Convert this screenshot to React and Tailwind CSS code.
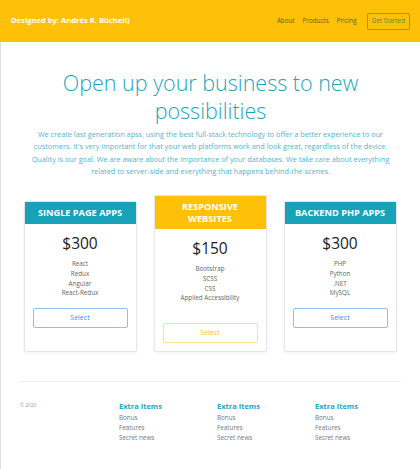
import React from "react";

const plans = [
  {
    title: ["SINGLE PAGE APPS"],
    price: "$300",
    items: ["React", "Redux", "Angular", "React-Redux"],
    head: "bg-[#17a2b8]",
    btn: "border-[#8fbdf5] text-[#3d8ef0]",
    wide: false,
  },
  {
    title: ["RESPONSIVE", "WEBSITES"],
    price: "$150",
    items: ["Bootstrap", "SCSS", "CSS", "Applied Accessibility"],
    head: "bg-[#ffc107]",
    btn: "border-[#ffe08a] text-[#f5c02a]",
    wide: true,
  },
  {
    title: ["BACKEND PHP APPS"],
    price: "$300",
    items: ["PHP", "Python", ".NET", "MySQL"],
    head: "bg-[#17a2b8]",
    btn: "border-[#8fbdf5] text-[#3d8ef0]",
    wide: false,
  },
];

function PlanCard({ plan }) {
  return (
    <div className="w-[113px] flex flex-col bg-white border border-[#e6e6e6] rounded-[2px] shadow-[0_1px_3px_rgba(0,0,0,0.06)]">
      <div
        className={`${plan.head} ${plan.wide ? "h-[33px]" : "h-[22px]"} flex flex-col items-center justify-center text-white font-bold text-[9.2px] leading-[11.5px]`}
      >
        {plan.title.map((t) => (
          <span key={t}>{t}</span>
        ))}
      </div>
      <div className={`flex flex-col items-center px-[8px] ${plan.wide ? "pb-[8px]" : "pb-[23px]"}`}>
        <div className="mt-[9px] text-[15.5px] leading-[20px] text-[#222]">{plan.price}</div>
        <ul className="mt-[6px] flex flex-col items-center text-[6.3px] leading-[9.7px] text-[#666]">
          {plan.items.map((i) => (
            <li key={i}>{i}</li>
          ))}
        </ul>
        <button
          className={`${plan.wide ? "mt-[20px]" : "mt-[10px]"} w-full h-[20px] border rounded-[2px] text-[7px] bg-white ${plan.btn}`}
        >
          Select
        </button>
      </div>
    </div>
  );
}

export default function App() {
  return (
    <div
      className="w-[420px] min-h-[469px] bg-white"
      style={{ fontFamily: '"Open Sans", "Noto Sans", sans-serif' }}
    >
      <header className="h-[42px] bg-[#ffc107] flex items-center justify-between pl-[11px] pr-[10px]">
        <span className="text-white font-bold text-[7.6px]">Designed by: Andrés R. Bücheli)</span>
        <nav className="flex items-center text-[6.3px] text-[#6b5a1a]">
          <a className="mr-[8px]">About</a>
          <a className="mr-[8px]">Products</a>
          <a className="mr-[10px]">Pricing</a>
          <a className="h-[17px] px-[4px] flex items-center border border-[#8a9a3c] text-[#5c8a3e] rounded-[2px]">
            Get Started
          </a>
        </nav>
      </header>

      <main className="border-l border-[#dcdcdc] min-h-[427px] flex flex-col">
        <section className="pt-[27px] flex flex-col items-center">
          <h1 className="text-[21.5px] font-light leading-[28px] text-[#22a5bb] text-center">
            Open up your business to new
            <br />
            possibilities
          </h1>
          <p className="mt-[3px] text-[7.3px] leading-[12.3px] text-[#4fb6c8] text-center whitespace-nowrap">
            We create last generation apss, using the best full-stack technology to offer a better experience to our
            <br />
            customers. It's very important for that your web platforms work and look great, regardless of the device.
            <br />
            Quality is our goal. We are aware about the importance of your databases. We take care about everything
            <br />
            related to server-side and everything that happens behind-the-scenes.
          </p>
        </section>

        <section className="mt-[18px] flex justify-center items-end gap-[17px] pr-[1px]">
          {plans.map((p) => (
            <PlanCard key={p.price + p.title[0]} plan={p} />
          ))}
        </section>

        <footer className="mx-[19px] mt-[29px] border-t border-[#f0f0f0] pt-[19px] grid grid-cols-[99px_98px_98px_1fr]">
          <div className="text-[4.8px] text-[#999] pt-[1px]">© 2020</div>
          {[0, 1, 2].map((k) => (
            <div key={k}>
              <h5 className="text-[7.5px] font-bold text-[#28a6bb] leading-[11px]">Extra Items</h5>
              <ul className="mt-[1px] text-[6.3px] leading-[10px] text-[#777]">
                <li>Bonus</li>
                <li>Features</li>
                <li>Secret news</li>
              </ul>
            </div>
          ))}
        </footer>
      </main>
    </div>
  );
}
